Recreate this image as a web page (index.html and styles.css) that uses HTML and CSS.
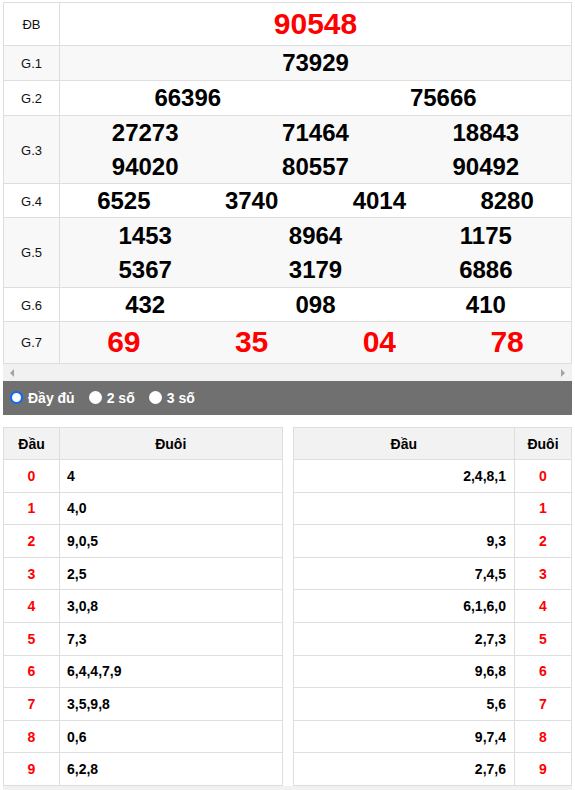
FILE: index.html
```html
<!DOCTYPE html>
<html lang="vi">
<head>
<meta charset="utf-8">
<link rel="stylesheet" href="styles.css">
</head>
<body>
<div class="page">
  <div class="kq">
    <div class="row h-db"><div class="lbl">ĐB</div><div class="nums c1"><span class="n big red">90548</span></div></div>
    <div class="row h-1 alt"><div class="lbl">G.1</div><div class="nums c1"><span class="n">73929</span></div></div>
    <div class="row h-1"><div class="lbl">G.2</div><div class="nums c2"><span class="n">66396</span><span class="n">75666</span></div></div>
    <div class="row h-3 alt"><div class="lbl">G.3</div><div class="nums c3"><span class="n">27273</span><span class="n">71464</span><span class="n">18843</span><span class="n">94020</span><span class="n">80557</span><span class="n">90492</span></div></div>
    <div class="row h-4"><div class="lbl">G.4</div><div class="nums c4"><span class="n">6525</span><span class="n">3740</span><span class="n">4014</span><span class="n">8280</span></div></div>
    <div class="row h-5 alt"><div class="lbl">G.5</div><div class="nums c3"><span class="n">1453</span><span class="n">8964</span><span class="n">1175</span><span class="n">5367</span><span class="n">3179</span><span class="n">6886</span></div></div>
    <div class="row h-4"><div class="lbl">G.6</div><div class="nums c3"><span class="n">432</span><span class="n">098</span><span class="n">410</span></div></div>
    <div class="row h-7 alt"><div class="lbl">G.7</div><div class="nums c4"><span class="n big red">69</span><span class="n big red">35</span><span class="n big red">04</span><span class="n big red">78</span></div></div>
  </div>
  <div class="hscroll"><span class="arr arr-l"></span><span class="arr arr-r"></span></div>
  <div class="opts">
    <label class="opt"><span class="radio checked"></span>Đầy đủ</label>
    <label class="opt"><span class="radio"></span>2 số</label>
    <label class="opt"><span class="radio"></span>3 số</label>
  </div>
  <div class="loto">
    <div class="lt left">
      <div class="lr head"><div class="c">Đầu</div><div class="c">Đuôi</div></div>
      <div class="lr"><div class="c red">0</div><div class="c v">4</div></div>
      <div class="lr"><div class="c red">1</div><div class="c v">4,0</div></div>
      <div class="lr"><div class="c red">2</div><div class="c v">9,0,5</div></div>
      <div class="lr"><div class="c red">3</div><div class="c v">2,5</div></div>
      <div class="lr"><div class="c red">4</div><div class="c v">3,0,8</div></div>
      <div class="lr"><div class="c red">5</div><div class="c v">7,3</div></div>
      <div class="lr"><div class="c red">6</div><div class="c v">6,4,4,7,9</div></div>
      <div class="lr"><div class="c red">7</div><div class="c v">3,5,9,8</div></div>
      <div class="lr"><div class="c red">8</div><div class="c v">0,6</div></div>
      <div class="lr"><div class="c red">9</div><div class="c v">6,2,8</div></div>
    </div>
    <div class="lt right">
      <div class="lr head"><div class="c">Đầu</div><div class="c">Đuôi</div></div>
      <div class="lr"><div class="c v">2,4,8,1</div><div class="c red">0</div></div>
      <div class="lr"><div class="c v"></div><div class="c red">1</div></div>
      <div class="lr"><div class="c v">9,3</div><div class="c red">2</div></div>
      <div class="lr"><div class="c v">7,4,5</div><div class="c red">3</div></div>
      <div class="lr"><div class="c v">6,1,6,0</div><div class="c red">4</div></div>
      <div class="lr"><div class="c v">2,7,3</div><div class="c red">5</div></div>
      <div class="lr"><div class="c v">9,6,8</div><div class="c red">6</div></div>
      <div class="lr"><div class="c v">5,6</div><div class="c red">7</div></div>
      <div class="lr"><div class="c v">9,7,4</div><div class="c red">8</div></div>
      <div class="lr"><div class="c v">2,7,6</div><div class="c red">9</div></div>
    </div>
  </div>
  <div class="strip"></div>
</div>
</body>
</html>
```

FILE: styles.css
```css
* { box-sizing: border-box; }
html, body { margin: 0; padding: 0; background: #fff; }
body { font-family: "Liberation Sans", Arial, sans-serif; color: #000; }
.page { padding: 2px 3px 0 3px; }

.kq { border: 1px solid #dedede; border-bottom: none; }
.row { display: grid; grid-template-columns: 56px 1fr; border-bottom: 1px solid #dedede; }
.row.alt { background: #f8f8f8; }
.h-db { height: 43px; }
.h-1 { height: 35px; }
.h-3 { height: 68px; }
.h-4 { height: 34px; }
.h-5 { height: 70px; }
.h-7 { height: 42px; }
.lbl { border-right: 1px solid #dedede; display: flex; align-items: center; justify-content: center; font-size: 13px; color: #111; }
.nums { display: grid; align-content: center; align-items: center; }
.c1 { grid-template-columns: 1fr; }
.c2 { grid-template-columns: 1fr 1fr; }
.c3 { grid-template-columns: 1fr 1fr 1fr; }
.c4 { grid-template-columns: 1fr 1fr 1fr 1fr; }
.n { text-align: center; font-weight: bold; font-size: 24px; line-height: 33px; padding-bottom: 1px; }
.n.big { font-size: 30px; line-height: 36px; }
.red { color: #f00; }

.hscroll { height: 17px; background: #f1f1f1; display: flex; justify-content: space-between; align-items: center; padding: 0 7px 0 7px; }
.arr { width: 0; height: 0; border-top: 4px solid transparent; border-bottom: 4px solid transparent; }
.arr-l { border-right: 4px solid #a3a3a3; }
.arr-r { border-left: 4px solid #a3a3a3; }

.opts { height: 34px; background: #707070; display: flex; align-items: center; padding-left: 7px; padding-bottom: 1px; color: #fff; font-weight: bold; font-size: 14px; }
.opt { display: flex; align-items: center; margin-right: 14px; }
.radio { width: 13px; height: 13px; border-radius: 50%; background: #fff; margin-right: 5px; }
.radio.checked { border: 2px solid #0b6bff; }

.loto { display: grid; grid-template-columns: 1fr 1fr; gap: 10px; margin-top: 12px; }
.lt { border: 1px solid #dedede; border-bottom: none; }
.lr { display: grid; height: 32.6px; border-bottom: 1px solid #dedede; font-size: 14px; font-weight: bold; }
.left .lr { grid-template-columns: 56px 1fr; }
.right .lr { grid-template-columns: 1fr 56px; }
.lr.head { height: 32px; background: #f2f2f2; }
.lr .c { display: flex; align-items: center; justify-content: center; }
.left .lr .c:first-child, .right .lr .c:first-child { border-right: 1px solid #dedede; }
.left .lr .c.v { justify-content: flex-start; padding-left: 7px; }
.right .lr .c.v { justify-content: flex-end; padding-right: 8px; }
.strip { height: 10px; background: #f1f1f1; }
```
